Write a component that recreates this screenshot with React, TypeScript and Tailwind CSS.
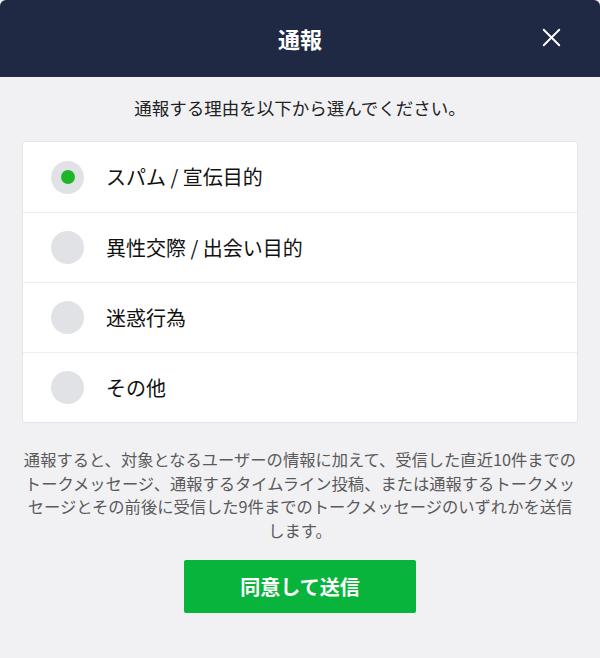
import { X } from 'lucide-react';

const reasons = [
    { label: "スパム / 宣伝目的", checked: true },
    { label: "異性交際 / 出会い目的", checked: false },
    { label: "迷惑行為", checked: false },
    { label: "その他", checked: false },
];

const App: React.FC = () => {
    return (
        <div
            className="w-[600px] h-[658px] bg-[#f1f1f4] flex flex-col overflow-hidden"
            style={{ fontFamily: '"Noto Sans CJK JP", "Noto Sans", sans-serif' }}
        >
            <header className="relative h-[77px] bg-[#1f2943] rounded-t-[6px] flex items-center justify-center">
                <h1 className="text-white text-[22px] font-bold">通報</h1>
                <button className="absolute right-[33px] top-[22px] text-white">
                    <X size={31} strokeWidth={1.5} />
                </button>
            </header>

            <p className="mt-[19px] text-center text-[17.5px] text-[#222] leading-[24px]">
                通報する理由を以下から選んでください。
            </p>

            <div className="mx-[22px] mt-[21px] bg-white border border-[#e4e4e8] rounded-[3px]">
                {reasons.map((reason, i) => (
                    <div
                        key={reason.label}
                        className={`h-[70px] flex items-center pl-[28px] ${i > 0 ? "border-t border-[#eeeef0]" : ""}`}
                    >
                        <span className="w-[33px] h-[33px] rounded-full bg-[#e1e2e5] flex items-center justify-center">
                            {reason.checked && <span className="w-[14px] h-[14px] rounded-full bg-[#1db628]" />}
                        </span>
                        <span className="ml-[22px] text-[20px] text-[#111]">{reason.label}</span>
                    </div>
                ))}
            </div>

            <p className="mt-[25px] px-[6px] text-center text-[16.3px] leading-[23.5px] text-[#5a5a5a]">
                通報すると、対象となるユーザーの情報に加えて、受信した直近10件までの<br />
                トークメッセージ、通報するタイムライン投稿、または通報するトークメッ<br />
                セージとその前後に受信した9件までのトークメッセージのいずれかを送信<br />
                します。
            </p>

            <div className="flex justify-center mt-[18px]">
                <button className="w-[232px] h-[53px] bg-[#08b43b] rounded-[2px] text-white text-[20px] font-bold">
                    同意して送信
                </button>
            </div>
        </div>
    );
};

export default App;
